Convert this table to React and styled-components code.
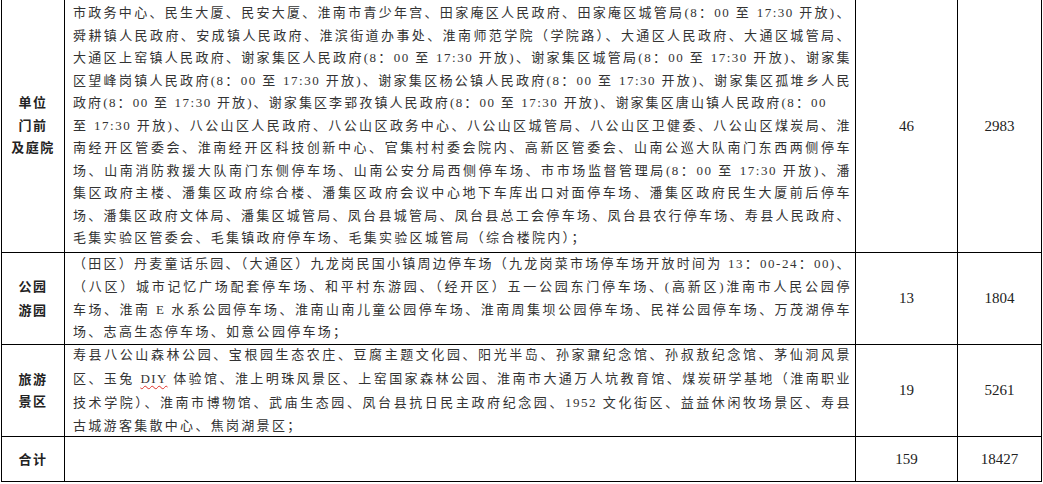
import styled, { createGlobalStyle } from 'styled-components';

const GlobalStyle = createGlobalStyle`
	html, body {
		margin: 0;
		padding: 0;
		background: #fff;
	}
	body {
		font-family: "Liberation Serif", "Noto Sans CJK SC", serif;
		color: #333;
	}
`;

const Sheet = styled.div`
	display: grid;
	grid-template-columns: 62px 790px 101px 83px;
	grid-template-rows: 252px 91px 91px 44px;
	gap: 1px;
	padding: 1px;
	width: fit-content;
	margin: -1px 0 0 1px;
	background: #000;
`;

const Label = styled.div`
	display: flex;
	flex-direction: column;
	align-items: center;
	justify-content: center;
	background: #fff;
	font-weight: 700;
	font-size: 13px;
	letter-spacing: 1.5px;
	line-height: ${(p) => p.$leading || 23}px;
	color: #222;
`;

const Content = styled.div`
	display: flex;
	flex-direction: column;
	justify-content: center;
	padding: 0 4px 0 8px;
	background: #fff;
	font-size: 13px;
	line-height: ${(p) => p.$leading}px;
`;

const Line = styled.div`
	text-align: ${(p) => (p.$last ? 'left' : 'justify')};
	text-align-last: ${(p) => (p.$last ? 'left' : 'justify')};
	letter-spacing: ${(p) => (p.$last ? 2.3 : 1.5)}px;
	padding-right: ${(p) => p.$inset || 0}px;
`;

const Figure = styled.div`
	display: flex;
	align-items: center;
	justify-content: center;
	background: #fff;
	font-size: 15px;
	color: #222;
`;

const Misspelled = styled.span`
	text-decoration: underline wavy #e0312a;
	text-decoration-thickness: 1px;
	text-underline-offset: 2px;
`;

const rows = [
	{
		label: ['单位', '门前', '及庭院'],
		labelLeading: 22.5,
		leading: 22.5,
		count: '46',
		total: '2983',
		lines: [
			'市政务中心、民生大厦、民安大厦、淮南市青少年宫、田家庵区人民政府、田家庵区城管局(8：00 至 17:30 开放)、',
			'舜耕镇人民政府、安成镇人民政府、淮滨街道办事处、淮南师范学院（学院路）、大通区人民政府、大通区城管局、',
			'大通区上窑镇人民政府、谢家集区人民政府(8：00 至 17:30 开放)、谢家集区城管局(8：00 至 17:30 开放)、谢家集',
			'区望峰岗镇人民政府(8：00 至 17:30 开放)、谢家集区杨公镇人民政府(8：00 至 17:30 开放)、谢家集区孤堆乡人民',
			{ text: '政府(8：00 至 17:30 开放)、谢家集区李郢孜镇人民政府(8：00 至 17:30 开放)、谢家集区唐山镇人民政府(8：00', inset: 24 },
			'至 17:30 开放)、八公山区人民政府、八公山区政务中心、八公山区城管局、八公山区卫健委、八公山区煤炭局、淮',
			'南经开区管委会、淮南经开区科技创新中心、官集村村委会院内、高新区管委会、山南公巡大队南门东西两侧停车',
			'场、山南消防救援大队南门东侧停车场、山南公安分局西侧停车场、市市场监督管理局(8：00 至 17:30 开放)、潘',
			'集区政府主楼、潘集区政府综合楼、潘集区政府会议中心地下车库出口对面停车场、潘集区政府民生大厦前后停车',
			'场、潘集区政府文体局、潘集区城管局、凤台县城管局、凤台县总工会停车场、凤台县农行停车场、寿县人民政府、',
			'毛集实验区管委会、毛集镇政府停车场、毛集实验区城管局（综合楼院内）；',
		],
	},
	{
		label: ['公园', '游园'],
		labelLeading: 24,
		leading: 22.6,
		count: '13',
		total: '1804',
		lines: [
			'（田区）丹麦童话乐园、（大通区）九龙岗民国小镇周边停车场（九龙岗菜市场停车场开放时间为 13：00-24：00)、',
			'（八区）城市记忆广场配套停车场、和平村东游园、（经开区）五一公园东门停车场、(高新区)淮南市人民公园停',
			'车场、淮南 E 水系公园停车场、淮南山南儿童公园停车场、淮南周集坝公园停车场、民祥公园停车场、万茂湖停车',
			'场、志高生态停车场、如意公园停车场；',
		],
	},
	{
		label: ['旅游', '景区'],
		labelLeading: 22,
		leading: 23.8,
		count: '19',
		total: '5261',
		lines: [
			'寿县八公山森林公园、宝根园生态农庄、豆腐主题文化园、阳光半岛、孙家鼐纪念馆、孙叔敖纪念馆、茅仙洞风景',
			{
				text: (
					<>
						区、玉兔 <Misspelled>DIY</Misspelled> 体验馆、淮上明珠风景区、上窑国家森林公园、淮南市大通万人坑教育馆、煤炭研学基地（淮南职业
					</>
				),
			},
			'技术学院）、淮南市博物馆、武庙生态园、凤台县抗日民主政府纪念园、1952 文化街区、益益休闲牧场景区、寿县',
			'古城游客集散中心、焦岗湖景区；',
		],
	},
	{
		label: ['合计'],
		leading: 22,
		count: '159',
		total: '18427',
		lines: [],
	},
];

const Row = ({ row }) => (
	<>
		<Label $leading={row.labelLeading}>
			{row.label.map((l) => (
				<div key={l}>{l}</div>
			))}
		</Label>
		<Content $leading={row.leading}>
			{row.lines.map((line, i) => {
				const item = typeof line === 'string' ? { text: line } : line;
				return (
					<Line key={i} $last={i === row.lines.length - 1} $inset={item.inset}>
						{item.text}
					</Line>
				);
			})}
		</Content>
		<Figure>{row.count}</Figure>
		<Figure>{row.total}</Figure>
	</>
);

export default function App() {
	return (
		<>
			<GlobalStyle />
			<Sheet>
				{rows.map((row) => (
					<Row key={row.count} row={row} />
				))}
			</Sheet>
		</>
	);
}
